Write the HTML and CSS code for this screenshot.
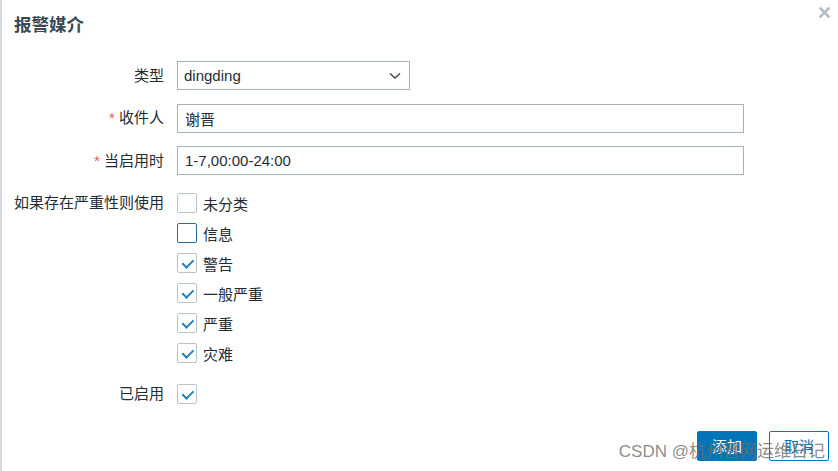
FILE: index.html
```html
<!DOCTYPE html>
<html lang="zh-CN">
<head>
    <meta charset="UTF-8">
    <meta name="viewport" content="width=device-width, initial-scale=1.0">
    <title>报警媒介</title>
    <link rel="stylesheet" href="styles.css">
</head>
<body>

<div class="dialog">
    <div class="dialog-header">
        <h4>报警媒介</h4>
        <button class="btn-close" title="关闭">
            <svg width="11" height="11" viewBox="0 0 11 11"><path d="M1.5 1.5 L9.5 9.5 M9.5 1.5 L1.5 9.5" stroke="#b2bec6" stroke-width="2.6" stroke-linecap="square"/></svg>
        </button>
    </div>

    <div class="form-list">
        <div class="form-row">
            <label class="form-label">类型</label>
            <div class="form-field">
                <div class="select-box">
                    <span>dingding</span>
                    <svg width="12" height="8" viewBox="0 0 12 8"><path d="M1 1.5 L6 6 L11 1.5" fill="none" stroke="#3a4650" stroke-width="1.4"/></svg>
                </div>
            </div>
        </div>

        <div class="form-row">
            <label class="form-label"><span class="required">*</span> 收件人</label>
            <div class="form-field">
                <input class="text-input" type="text" value="谢晋">
            </div>
        </div>

        <div class="form-row">
            <label class="form-label"><span class="required">*</span> 当启用时</label>
            <div class="form-field">
                <input class="text-input" type="text" value="1-7,00:00-24:00">
            </div>
        </div>

        <div class="form-row row-top severity-row">
            <label class="form-label">如果存在严重性则使用</label>
            <ul class="check-list">
                <li><span class="checkbox"></span>未分类</li>
                <li><span class="checkbox focused"></span>信息</li>
                <li><span class="checkbox checked"></span>警告</li>
                <li><span class="checkbox checked"></span>一般严重</li>
                <li><span class="checkbox checked"></span>严重</li>
                <li><span class="checkbox checked"></span>灾难</li>
            </ul>
        </div>

        <div class="form-row enabled-row">
            <label class="form-label">已启用</label>
            <div class="form-field">
                <span class="checkbox checked"></span>
            </div>
        </div>
    </div>

    <div class="dialog-footer">
        <button class="btn btn-primary">添加</button>
        <button class="btn btn-alt">取消</button>
    </div>

    <div class="watermark">CSDN @杭州晋网运维日记</div>
</div>

</body>
</html>
```

FILE: styles.css
```css
body {
    margin: 0;
    font-family: "Liberation Sans", Arial, "Noto Sans CJK SC", sans-serif;
    font-size: 15px;
    color: #1f2c33;
    background-color: #fff;
}

.dialog {
    position: relative;
    height: 471px;
    box-sizing: border-box;
    border-left: 2px solid #d3dbe0;
    background-color: #fff;
}

.dialog-header {
    position: relative;
    height: 52px;
}

.dialog-header h4 {
    margin: 0;
    padding: 14px 0 0 12px;
    font-size: 17.5px;
    line-height: 22px;
    font-weight: bold;
    color: #3b4954;
}

.btn-close {
    position: absolute;
    top: 7px;
    right: 8px;
    padding: 0;
    border: none;
    background: none;
    line-height: 0;
    cursor: pointer;
}

.form-list {
    padding-top: 9px;
}

.form-row {
    display: flex;
    align-items: center;
    margin-bottom: 13.5px;
}

.form-row.row-top {
    align-items: flex-start;
}

.form-label {
    width: 162px;
    flex-shrink: 0;
    margin-right: 13px;
    text-align: right;
    line-height: 20px;
    white-space: nowrap;
}

.required {
    color: #e45959;
}

.form-field {
    display: flex;
    align-items: center;
}

.select-box {
    width: 233px;
    height: 29px;
    box-sizing: border-box;
    border: 1px solid #a6b4b9;
    display: flex;
    align-items: center;
    justify-content: space-between;
    padding: 0 8px 0 6px;
}

.text-input {
    width: 567px;
    height: 29px;
    box-sizing: border-box;
    border: 1px solid #a6b4b9;
    padding: 0 7px;
    font-family: inherit;
    font-size: 15px;
    color: #1f2c33;
    outline: none;
}

.severity-row {
    margin-top: 18px;
    margin-bottom: 0;
}

.check-list {
    list-style: none;
    margin: 0;
    padding: 0;
}

.check-list li {
    display: flex;
    align-items: center;
    height: 20px;
    margin-bottom: 10px;
}

.checkbox {
    width: 20px;
    height: 20px;
    box-sizing: border-box;
    border: 1px solid #b9c5ca;
    border-radius: 2px;
    margin-right: 6px;
    display: inline-block;
    position: relative;
    background-color: #fff;
}

.checkbox.focused {
    border-color: #2a6e9f;
    border-width: 1.5px;
}

.checkbox.checked::after {
    content: "";
    position: absolute;
    left: 5px;
    top: 3px;
    width: 5px;
    height: 9px;
    border-right: 2.4px solid #1c7fc1;
    border-bottom: 2.4px solid #1c7fc1;
    transform: rotate(45deg) translate(1px, -1px);
}

.enabled-row {
    margin-top: 11px;
}

.dialog-footer {
    display: flex;
    justify-content: flex-end;
    gap: 12px;
    padding: 13px 9px 0 0;
}

.btn {
    width: 60px;
    height: 30px;
    box-sizing: border-box;
    border-radius: 2px;
    font-family: inherit;
    font-size: 15px;
    padding: 0;
    cursor: pointer;
}

.btn-primary {
    background-color: #0275b8;
    border: 1px solid #0275b8;
    color: #fff;
}

.btn-alt {
    background-color: #fff;
    border: 1px solid #0275b8;
    color: #0275b8;
}

.watermark {
    position: absolute;
    right: 13px;
    bottom: 9px;
    font-size: 17px;
    color: rgba(110, 110, 110, 0.8);
    white-space: nowrap;
    pointer-events: none;
}
```
